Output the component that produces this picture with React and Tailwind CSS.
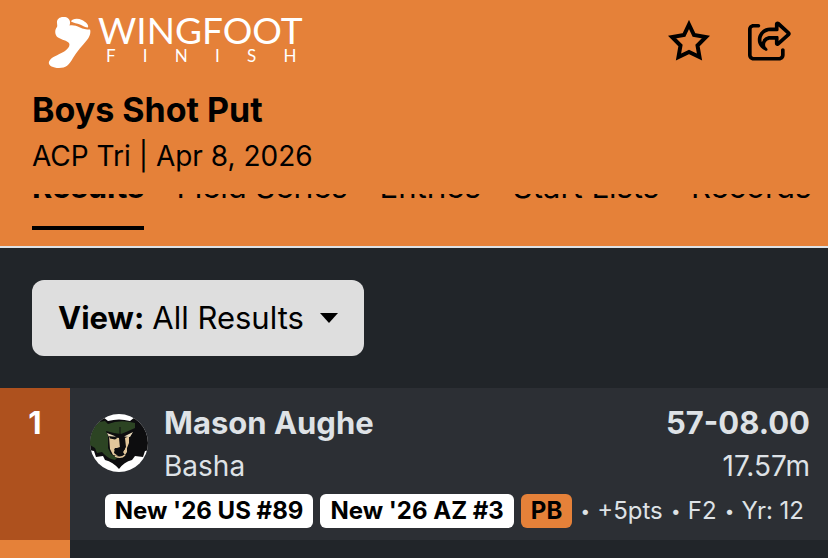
import { FaRegShareFromSquare } from "react-icons/fa6";

const tabs = ["Results", "Field Series", "Entries", "Start Lists", "Records"];
const details = ["+5pts", "F2", "Yr: 12"];

function FootLogo() {
  return (
    <svg viewBox="0 0 44 54" className="h-[54px] w-11 shrink-0" fill="#fff" aria-hidden="true">
      <path d="M16 3C12 2.500 8.500 5 9 9C9 10.500 9.500 11.500 9 13C6.500 16 6.500 21 10 23.500C14 26 19 26.500 21 29C22.500 32 20 35 17 37C13 40 5 42 2 46C-1.500 50 3 54 11 54C18 54 21 51 25 44C29 37 35 31 39 26C42 22 43 18 42 15.500C38 15.500 35 15 32 13.500C28 11.500 25 11 21.500 11.500C23.500 6 20 3 16 3Z" />
      <path d="M23 7.500C24 4.500 30 4 34 6C38 8 41 11 40 13.500C37 13.500 35 12 32 10.500C29 9 26 9.500 23 7.500Z" />
    </svg>
  );
}

function StarIcon() {
  return (
    <svg viewBox="0 0 42 42" className="size-[42px]" fill="none" stroke="currentColor" strokeWidth="4" aria-hidden="true">
      <path d="M21 4.500L26 15L38 17L29.500 25.500L31.500 37L21 32L10.500 37L12.500 25.500L4 17L16 15Z" />
    </svg>
  );
}

function BearBadge() {
  return (
    <svg viewBox="0 0 58 58" className="size-[58px] shrink-0" role="img" aria-label="Basha">
      <defs>
        <clipPath id="crest">
          <circle cx="29" cy="29" r="29" />
        </clipPath>
      </defs>
      <g clipPath="url(#crest)">
        <path fill="#fff" d="M0 0H58V58H0Z" />
        <path fill="#0d0d0f" d="M-2 12L8 6L13 3L18 7Q29 4 40 7L45 3L50 7L60 14V36L55 37L53 43L45 42L42 46Q34 48 29 55Q23 48 15 46L13 42L6 43L4 37L-2 36Z" />
        <path fill="#2c4423" d="M0 17L9 8L15 7L18 10Q28 6 40 8L45 9L45 14L36 18L31 20L24 19L16 17L18 22V34L21 40L27 44L25 46Q19 45 15 41L12 38L7 39L5 34L0 31Z" />
        <path stroke="#0d0d0f" strokeWidth="1" fill="none" d="M30 13V20" />
        <path fill="#e2c79b" d="M19 22L29 24L30 34L25 34L24 39L28 42L23 41L20 35Z" />
        <path fill="#e2c79b" d="M35 24L39 22L39 29L37 34L37 38L35 41L33 38L36 33Z" />
        <path fill="#e8d9bb" d="M17 19L26 22.500L19 23ZM34 22.500L43 18L40 23Z" />
        <path fill="#0d0d0f" d="M19 22L28 23.500L25 25.500L20 24.500Z" />
        <path fill="#0d0d0f" d="M24 35L30 33L35 35L32 39L27 39Z" />
        <path stroke="#e2c79b" strokeWidth="1.500" fill="none" d="M25 42Q31 45 35 41" />
      </g>
    </svg>
  );
}

function Badge({ className, children }) {
  return (
    <span className={`rounded-md px-2.5 font-bold text-black ${className}`}>
      {children}
    </span>
  );
}

export default function App() {
  return (
    <div className="min-h-screen overflow-hidden bg-[#212529] font-['Inter','Liberation_Sans',sans-serif] text-[#dee2e6]">
      <header className="border-b-2 border-[#dee2e6] bg-[#e58139] text-black">
        <div className="flex items-start justify-between pt-3.5 pr-9 pl-12">
          <a href="#home" className="flex gap-1.5 text-white">
            <FootLogo />
            <span className="font-['Lato',sans-serif]">
              <span className="block text-[37px] leading-[32px]">WINGFOOT</span>
              <span className="flex justify-between pr-1.5 pl-2 text-[17px] leading-5">
                <span>F</span>
                <span>I</span>
                <span>N</span>
                <span>I</span>
                <span>S</span>
                <span>H</span>
              </span>
            </span>
          </a>
          <div className="flex items-center gap-[38px] pt-1.5">
            <button type="button" aria-label="Favorite">
              <StarIcon />
            </button>
            <button type="button" aria-label="Share">
              <FaRegShareFromSquare className="h-10 w-[44px]" />
            </button>
          </div>
        </div>
        <h1 className="mt-5 px-8 text-[34px] leading-[44px] font-bold">Boys Shot Put</h1>
        <p className="px-8 text-[28px] leading-[48px]">ACP Tri | Apr 8, 2026</p>
        <nav className="mt-3.5 flex h-[52px] items-end gap-8 overflow-hidden px-8 pb-4 text-[31px] leading-10 whitespace-nowrap">
          {tabs.map((tab, i) => (
            <a
              key={tab}
              href="#tab"
              className={i === 0 ? "border-b-4 border-black pb-[19px] font-bold" : "border-b-4 border-transparent pb-[19px]"}
            >
              {tab}
            </a>
          ))}
        </nav>
      </header>

      <main>
        <div className="px-8 py-8">
          <div className="inline-flex h-[76px] items-center rounded-xl bg-[#dedede] px-[26px] text-[31px] text-black">
            <label htmlFor="view" className="font-bold">View:</label>
            <select id="view" className="ml-2 appearance-none bg-transparent [field-sizing:content]">
              <option>All Results</option>
            </select>
            <svg viewBox="0 0 18 10" className="ml-4 h-2.5 w-[18px]" aria-hidden="true">
              <path d="M0 0H18L9 10Z" />
            </svg>
          </div>
        </div>

        <ol>
          <li className="flex bg-[#2c2f34]">
            <div className="w-[70px] shrink-0 bg-[#ae511e] pt-4 text-center text-[31px] leading-[38px] font-bold text-white">1</div>
            <div className="min-w-0 flex-1 pt-4 pr-[18px] pb-3 pl-5">
              <div className="flex items-start gap-4">
                <div className="pt-2.5">
                  <BearBadge />
                </div>
                <div className="flex-1">
                  <h2 className="text-[31px] leading-[38px] font-bold">Mason Aughe</h2>
                  <p className="text-[28px] leading-[48px]">Basha</p>
                </div>
                <div className="text-right">
                  <p className="text-[31px] leading-[38px] font-bold">57-08.00</p>
                  <p className="text-[28px] leading-[48px]">17.57m</p>
                </div>
              </div>
              <div className="mt-1 flex items-center justify-end gap-[7px] pr-1.5 text-[24px] leading-[34px] whitespace-nowrap">
                <Badge className="bg-white">New '26 US #89</Badge>
                <Badge className="bg-white">New '26 AZ #3</Badge>
                <Badge className="bg-[#e58139]">PB</Badge>
                {details.map((detail) => (
                  <span key={detail} className="flex gap-1.5">
                    <span className="w-3 text-center text-[17px]">•</span>
                    <span>{detail}</span>
                  </span>
                ))}
              </div>
            </div>
          </li>
          <li className="flex">
            <div className="h-[18px] w-[70px] bg-[#e58139]" />
          </li>
        </ol>
      </main>
    </div>
  );
}
